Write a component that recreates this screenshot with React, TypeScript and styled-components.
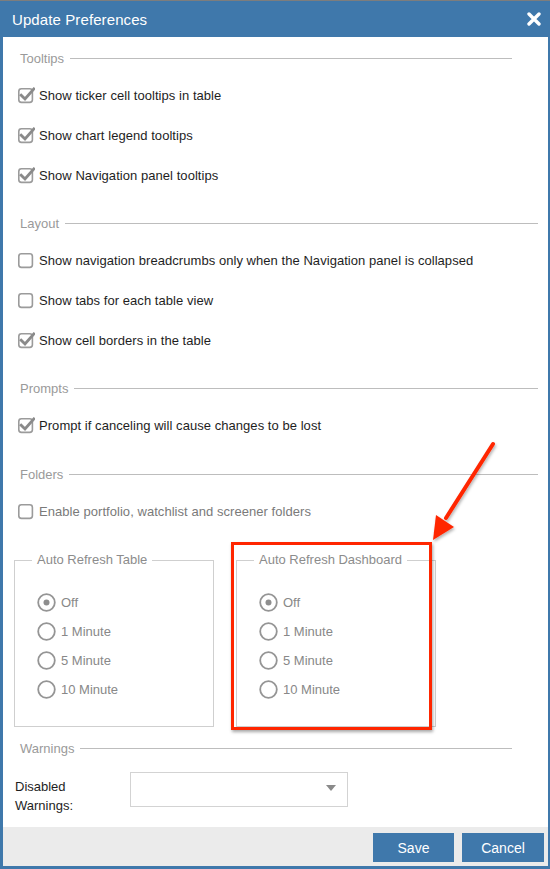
import React from "react";
import styled, { createGlobalStyle } from "styled-components";

const BLUE = "#3f78ab";

const Global = createGlobalStyle`
  html, body { margin: 0; padding: 0; }
  body {
    background: #7d7d7d;
    font-family: "Liberation Sans", Arial, sans-serif;
    width: 550px;
    height: 869px;
    overflow: hidden;
  }
`;

const Page = styled.div`
  position: relative;
  width: 550px;
  height: 869px;
  padding-top: 1px;
  box-sizing: border-box;
`;

const Dialog = styled.div`
  height: 868px;
  box-sizing: border-box;
  border-left: 3px solid ${BLUE};
  border-right: 2px solid ${BLUE};
  border-bottom: 3px solid ${BLUE};
  background: #fff;
  display: flex;
  flex-direction: column;
`;

const TitleBar = styled.div`
  height: 36px;
  flex: none;
  background: ${BLUE};
  display: flex;
  align-items: center;
  justify-content: space-between;
  padding: 0 7px 0 9px;
  color: #fff;
`;

const Title = styled.span`
  font-size: 15px;
  letter-spacing: 0.1px;
`;

const CloseBtn = styled.span`
  display: flex;
  width: 14px;
  height: 14px;
`;

const Body = styled.div`
  flex: 1;
  padding: 11px 10px 0 12px;
`;

const Section = styled.div<{ $gap?: number }>`
  margin-top: ${(p) => p.$gap ?? 0}px;
`;

const Header = styled.div<{ $short?: boolean }>`
  height: 20px;
  display: flex;
  align-items: center;
  gap: 6px;
  padding-left: 5px;
  margin-right: ${(p) => (p.$short ? 26 : 0)}px;
  color: #9a9a9a;
  font-size: 13px;
  &::after {
    content: "";
    flex: 1;
    height: 1px;
    background: #bdbdbd;
  }
`;

const Rows = styled.div`
  margin-top: 7px;
`;

const Row = styled.div<{ $muted?: boolean }>`
  height: 40px;
  display: flex;
  align-items: center;
  gap: 4px;
  font-size: 13px;
  letter-spacing: 0.05px;
  color: ${(p) => (p.$muted ? "#7a7a7a" : "#1e1e1e")};
`;

const Box = styled.svg`
  flex: none;
  margin-left: 2px;
`;

const Check = ({ checked }: { checked?: boolean }) => (
  <Box width="18" height="18" viewBox="0 0 18 18">
    <rect x="1.8" y="2.8" width="13.6" height="13.6" rx="2.6" fill="#fff" stroke="#9b9b9b" strokeWidth="1.6" />
    {checked && (
      <path d="M4.2 9.2 L8 13 L16.8 3" fill="none" stroke="#8a8a8a" strokeWidth="2.9" strokeLinecap="square" />
    )}
  </Box>
);

const Groups = styled.div`
  display: flex;
  gap: 22px;
  margin-top: 21px;
  margin-left: -1px;
`;

const Group = styled.fieldset`
  margin: 0;
  width: 200px;
  box-sizing: border-box;
  border: 1px solid #cfcfcf;
  padding: 20px 0 22px 22px;
  min-inline-size: 0;
`;

const Legend = styled.legend`
  padding: 0 5px;
  margin-left: -5px;
  font-size: 13px;
  line-height: 16px;
  color: #8c8c8c;
`;

const RadioRow = styled.div`
  height: 29px;
  display: flex;
  align-items: center;
  gap: 5px;
  font-size: 13px;
  color: #888;
`;

const Radio = ({ checked }: { checked?: boolean }) => (
  <svg width="19" height="19" viewBox="0 0 19 19" style={{ flex: "none" }}>
    <circle cx="9.5" cy="9.5" r="8.3" fill="#fff" stroke="#959595" strokeWidth="1.8" />
    {checked && <circle cx="9.5" cy="9.5" r="3" fill="#8e8e8e" />}
  </svg>
);

const FieldRow = styled.div`
  display: flex;
  align-items: flex-start;
  margin-top: 14px;
`;

const FieldLabel = styled.div`
  width: 115px;
  padding-top: 5px;
  font-size: 13px;
  line-height: 19px;
  color: #1e1e1e;
`;

const Select = styled.div`
  width: 218px;
  height: 35px;
  box-sizing: border-box;
  border: 1px solid #d3d3d3;
  display: flex;
  justify-content: flex-end;
  padding: 12px 11px 0 0;
  &::after {
    content: "";
    width: 0;
    height: 0;
    border-left: 5px solid transparent;
    border-right: 5px solid transparent;
    border-top: 6px solid #8a8a8a;
  }
`;

const Footer = styled.div`
  height: 39px;
  flex: none;
  background: #ebebeb;
  display: flex;
  justify-content: flex-end;
  align-items: flex-start;
  gap: 8px;
  padding: 6px 4px 0 0;
  box-sizing: border-box;
`;

const Button = styled.button<{ $w: number }>`
  width: ${(p) => p.$w}px;
  height: 29px;
  border: none;
  background: ${BLUE};
  color: #fff;
  font-family: "Liberation Sans", Arial, sans-serif;
  font-size: 14px;
  padding: 0;
`;

const Highlight = styled.div`
  position: absolute;
  left: 231px;
  top: 542px;
  width: 201px;
  height: 188px;
  box-sizing: border-box;
  border: 3.5px solid #ff2600;
  box-shadow: 1px 2px 3px rgba(0, 0, 0, 0.35);
  pointer-events: none;
`;

const ArrowLayer = styled.svg`
  position: absolute;
  left: 0;
  top: 0;
  pointer-events: none;
`;

const refreshOptions = ["Off", "1 Minute", "5 Minute", "10 Minute"];

const RefreshGroup = ({ title }: { title: string }) => (
  <Group>
    <Legend>{title}</Legend>
    {refreshOptions.map((o, i) => (
      <RadioRow key={o}>
        <Radio checked={i === 0} />
        {o}
      </RadioRow>
    ))}
  </Group>
);

export default function App() {
  return (
    <Page>
      <Global />
      <Dialog>
        <TitleBar>
          <Title>Update Preferences</Title>
          <CloseBtn>
            <svg width="14" height="14" viewBox="0 0 14 14">
              <path d="M2 2 L12 12 M12 2 L2 12" stroke="#fff" strokeWidth="3.4" strokeLinecap="round" />
            </svg>
          </CloseBtn>
        </TitleBar>
        <Body>
          <Section>
            <Header $short>Tooltips</Header>
            <Rows>
              <Row><Check checked />Show ticker cell tooltips in table</Row>
              <Row><Check checked />Show chart legend tooltips</Row>
              <Row><Check checked />Show Navigation panel tooltips</Row>
            </Rows>
          </Section>
          <Section $gap={18}>
            <Header>Layout</Header>
            <Rows>
              <Row><Check />Show navigation breadcrumbs only when the Navigation panel is collapsed</Row>
              <Row><Check />Show tabs for each table view</Row>
              <Row><Check checked />Show cell borders in the table</Row>
            </Rows>
          </Section>
          <Section $gap={18}>
            <Header>Prompts</Header>
            <Rows>
              <Row><Check checked />Prompt if canceling will cause changes to be lost</Row>
            </Rows>
          </Section>
          <Section $gap={19}>
            <Header>Folders</Header>
            <Rows>
              <Row $muted><Check />Enable portfolio, watchlist and screener folders</Row>
            </Rows>
          </Section>
          <Groups>
            <RefreshGroup title="Auto Refresh Table" />
            <RefreshGroup title="Auto Refresh Dashboard" />
          </Groups>
          <Section $gap={11}>
            <Header $short>Warnings</Header>
            <FieldRow>
              <FieldLabel>Disabled<br />Warnings:</FieldLabel>
              <Select />
            </FieldRow>
          </Section>
        </Body>
        <Footer>
          <Button $w={81}>Save</Button>
          <Button $w={82}>Cancel</Button>
        </Footer>
      </Dialog>
      <Highlight />
      <ArrowLayer width="550" height="869" viewBox="0 0 550 869">
        <defs>
          <filter id="sh" x="-20%" y="-20%" width="140%" height="140%">
            <feDropShadow dx="1" dy="2" stdDeviation="1.5" floodColor="#000" floodOpacity="0.3" />
          </filter>
        </defs>
        <g filter="url(#sh)">
          <line x1="493" y1="444" x2="446" y2="518" stroke="#ff2600" strokeWidth="4" strokeLinecap="round" />
          <polygon points="433,540 454,527 436,515" fill="#ff2600" />
        </g>
      </ArrowLayer>
    </Page>
  );
}
